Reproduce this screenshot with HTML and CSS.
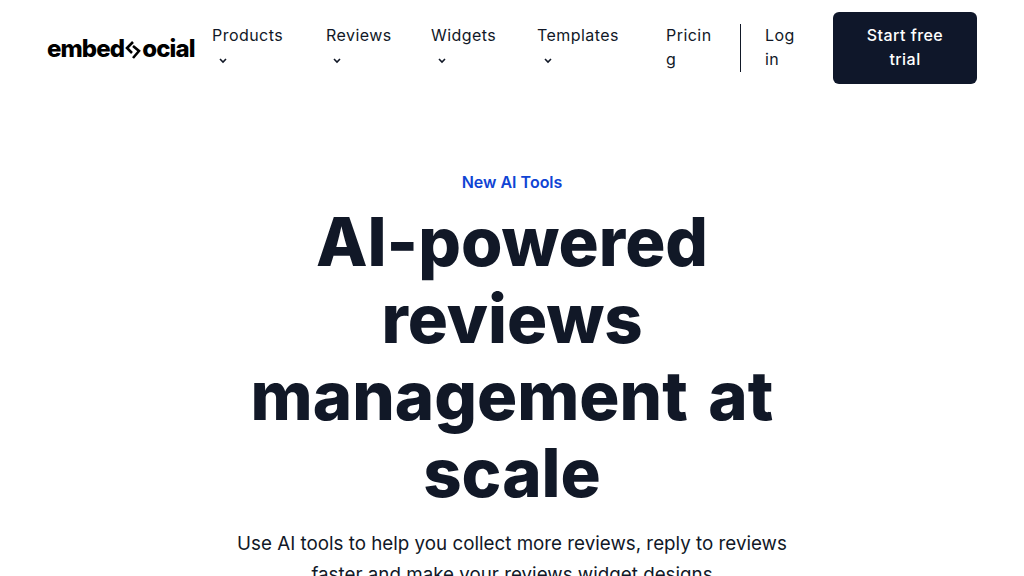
FILE: index.html
```html
<!DOCTYPE html>
<html lang="en">
<head>
    <meta charset="UTF-8">
    <title>AI-powered reviews management at scale</title>
    <link rel="stylesheet" href="styles.css">
</head>
<body>

<!-- Top navigation -->
<header class="topbar">
    <a class="logo" href="#">
        <span>embed</span>
        <svg class="logo-mark" viewBox="0 0 16 18" width="16" height="18">
            <path d="M8 1 L2 7 L7 12" fill="none" stroke="#000" stroke-width="2.6"/>
            <path d="M8 5 L14 10 L8 17" fill="none" stroke="#000" stroke-width="2.6"/>
        </svg>
        <span>ocial</span>
    </a>
    <nav class="menu">
        <a class="menu-item item-products" href="#">Products<svg class="caret" viewBox="0 0 8 6" width="8" height="6"><path d="M1 1 L4 4 L7 1" fill="none" stroke="#111827" stroke-width="1.6"/></svg></a>
        <a class="menu-item item-reviews" href="#">Reviews<svg class="caret" viewBox="0 0 8 6" width="8" height="6"><path d="M1 1 L4 4 L7 1" fill="none" stroke="#111827" stroke-width="1.6"/></svg></a>
        <a class="menu-item item-widgets" href="#">Widgets<svg class="caret" viewBox="0 0 8 6" width="8" height="6"><path d="M1 1 L4 4 L7 1" fill="none" stroke="#111827" stroke-width="1.6"/></svg></a>
        <a class="menu-item item-templates" href="#">Templates<svg class="caret" viewBox="0 0 8 6" width="8" height="6"><path d="M1 1 L4 4 L7 1" fill="none" stroke="#111827" stroke-width="1.6"/></svg></a>
        <a class="menu-item item-pricing" href="#">Pricing</a>
    </nav>
    <div class="divider"></div>
    <a class="menu-item item-login" href="#">Log in</a>
    <a class="trial-btn" href="#">Start free trial</a>
</header>

<!-- Hero -->
<main class="hero">
    <p class="eyebrow">New AI Tools</p>
    <h1>AI-powered reviews management at scale</h1>
    <p class="lead">Use AI tools to help you collect more reviews, reply to reviews faster and make your reviews widget designs</p>
</main>

</body>
</html>
```
FILE: styles.css
```css
html, body {
    margin: 0;
    height: 576px;
    overflow: hidden;
}

body {
    font-family: Inter, "Liberation Sans", sans-serif;
    background-color: white;
    color: #111827;
}

a {
    color: inherit;
    text-decoration: none;
}

/* Top navigation */
.topbar {
    display: flex;
    align-items: center;
    height: 72px;
    padding: 12px 47px 12px 47px;
}

.logo {
    display: flex;
    align-items: center;
    width: 165px;
    flex-shrink: 0;
    font-size: 24px;
    font-weight: 800;
    letter-spacing: -0.9px;
    color: #000;
}

.logo-mark {
    margin: 3px 1px 0 1px;
}

.menu {
    display: flex;
    margin-top: -2px;
}

.menu-item {
    display: block;
    font-size: 16px;
    line-height: 24px;
    letter-spacing: 0.45px;
    word-break: break-all;
}

.caret {
    display: block;
    margin: 11px 0 0 7px;
}

.item-products { width: 114px; }
.item-reviews { width: 105px; }
.item-widgets { width: 106px; }
.item-templates { width: 129px; }
.item-pricing { width: 46px; }

.divider {
    width: 1px;
    height: 48px;
    margin: 0 24px 0 28px;
    background-color: #111827;
}

.item-login {
    width: 44px;
    word-break: normal;
    margin-top: -2px;
    margin-right: 24px;
}

.trial-btn {
    display: block;
    box-sizing: border-box;
    width: 144px;
    height: 72px;
    padding: 11px 24px;
    border-radius: 6px;
    background-color: #0f172a;
    color: white;
    font-size: 16px;
    font-weight: 500;
    line-height: 24px;
    letter-spacing: 0.45px;
    text-align: center;
}

/* Hero */
.hero {
    width: 640px;
    margin: 0 auto;
    padding-top: 74px;
    text-align: center;
}

.eyebrow {
    margin: 0;
    font-size: 16px;
    font-weight: 600;
    line-height: 24px;
    color: #1044d4;
}

h1 {
    width: 580px;
    margin: 9px auto 0;
    font-size: 67px;
    font-weight: 800;
    line-height: 77px;
    word-spacing: 6px;
}

.lead {
    width: 580px;
    margin: 17px auto 0;
    font-size: 18.8px;
    line-height: 31px;
}
```
